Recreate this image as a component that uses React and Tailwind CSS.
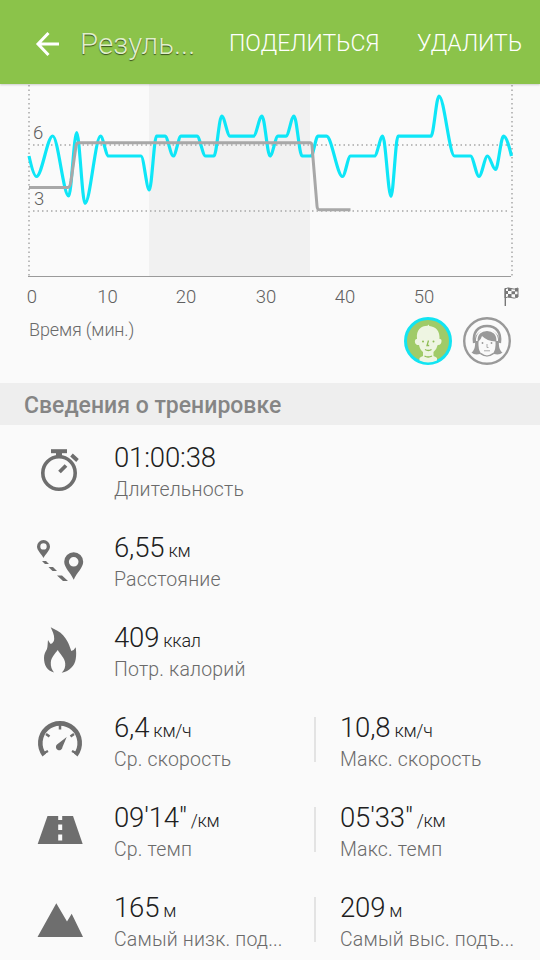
import React from 'react';

const heartPoints = [
  [29, 156], [36.5, 176.5], [52.7, 136], [68.7, 196], [76.7, 132.5], [85, 203.5], [100.5, 136.2],
  [108.5, 156], [141, 156], [149.3, 190], [156.5, 136.2], [165, 136.2], [173.3, 156], [181, 136.2],
  [197, 136.2], [205.5, 156], [214, 156], [221.7, 116], [230, 136.2], [253.5, 136.2], [262, 116],
  [270, 156], [278, 136.2], [286, 136.2], [294, 116], [302, 156], [311, 156], [318, 136.2],
  [326.5, 136.2], [342.5, 176.5], [350.5, 156], [374.5, 156], [382.7, 136.2], [391, 196.5],
  [398, 136.2], [431, 136.2], [439, 96], [454.5, 156], [470.5, 156], [479, 176.5], [487.5, 156],
  [495.5, 169.5], [503.5, 136.2], [511.5, 156],
];

const curve = heartPoints.reduce((d, [x, y], i) => {
  if (i === 0) return `M${x} ${y}`;
  const [px, py] = heartPoints[i - 1];
  if (i === 1) return `${d}C${px + 2} ${py + 9} ${x - 2.5} ${y} ${x} ${y}`;
  if (i === heartPoints.length - 1) return `${d}C${px + 3} ${py} ${x - 2} ${y - 8} ${x} ${y}`;
  const k = (x - px) * 0.33;
  return `${d}C${px + k} ${py} ${x - k} ${y} ${x} ${y}`;
}, '');

function Chart() {
  return (
    <svg className="block h-[226px] w-[540px]" viewBox="0 84 540 226" fill="none">
      <rect x="149" y="84" width="161" height="192" fill="#f1f1f1" />
      <g stroke="#a8a8a8" strokeWidth="1.5" strokeDasharray="1.5 3">
        <path d="M29 85V276M512 85V276" />
        <path d="M33 145H508M33 211H508" />
      </g>
      <path d="M28 276.500H511" stroke="#9a9a9a" strokeWidth="1" />
      <path d={curve} stroke="#0ee6f7" strokeWidth="3.200" strokeLinejoin="round" />
      <path d="M29 187.5H68C70 187.5 70.5 184 71 181L76 146Q76.5 142.8 79 142.8H310.5Q311.700 143 312 146L317 206Q317.300 209.700 319 209.700H350.500" stroke="#a8a8a8" strokeWidth="3" />
      <g fill="#606060" fontFamily="Roboto" fontSize="18.500" fontWeight="300">
        <text x="33" y="139">6</text>
        <text x="34" y="205">3</text>
        <text x="32" y="303" textAnchor="middle">0</text>
        <text x="107.500" y="303" textAnchor="middle">10</text>
        <text x="186" y="303" textAnchor="middle">20</text>
        <text x="266" y="303" textAnchor="middle">30</text>
        <text x="345" y="303" textAnchor="middle">40</text>
        <text x="424" y="303" textAnchor="middle">50</text>
      </g>
      <path d="M505.300 288V306" stroke="#777" strokeWidth="1.400" />
      <path d="M505 289q3-2 6-.5t7-.5v9q-4 2-7 .5t-6 .5z" stroke="#777" strokeWidth="1" />
      <path d="M508 288h3.500v3h-3.500zM515 288.500h3v3h-3zM511.500 291.300h3.500v3h-3.500zM505 291h3v3h-3zM508 294h3.500v3.500h-3.500zM515 294.200h3v3h-3z" fill="#777" />
    </svg>
  );
}

function ManAvatar() {
  return (
    <svg className="block size-12" viewBox="0 0 48 48" fill="none">
      <circle cx="24" cy="24" r="22.500" fill="#a0cb68" stroke="#12e4f2" strokeWidth="3" />
      <path d="M15.500 43.500v-2.500q1-1 3.500-2v-4q-3-2-4-7c-3 .3-4.500-2-4-4.500q.3-2 2-1.500C12 13 17 8.800 23.500 8.800l1-1.300.8 1.400C32 9.500 36 14 35.500 22q2-.5 2 1.500c.3 2.500-1.300 4.800-3.800 4.500q-1 4.500-4.200 7v4q2.500 1 3.500 2v2.500q-9 4-17.500 0z" fill="#eef5e2" />
      <path d="M24.500 23.500l-1.500 5h2.200M21 32.500q3.500 2 6.500 0M20.500 39q3.500 2 7.500 0" stroke="#8fbd55" strokeWidth="1.300" />
      <circle cx="19" cy="24.500" r="1" fill="#8fbd55" />
      <circle cx="29.500" cy="24.500" r="1" fill="#8fbd55" />
    </svg>
  );
}

function WomanAvatar() {
  return (
    <svg className="block size-12" viewBox="0 0 48 48" fill="none">
      <circle cx="24" cy="24" r="22.800" stroke="#999" strokeWidth="2.400" />
      <path d="M11.200 26C9.500 15 15 9 24 9s14.500 6 12.800 17" stroke="#999" strokeWidth="2.600" />
      <path d="M12 24C11.500 16.500 17 13.500 24 13.500S36.500 16.500 36 24c-.5 5 .5 9.500 3.500 11.500-2 2-5 2.300-8.500 1.500Q24 41.500 17 37c-3.500.8-6.500.5-8.500-1.500 3-2 4-6.500 3.500-11.500z" fill="#999" />
      <path d="M13.800 24C13.500 17 18 13.200 24 13.200S34.500 17 34.200 24" stroke="#fafafa" strokeWidth="1.600" />
      <path d="M15.500 24.500q2.500-2 3.500-5.500 5 5 13.500 5.500 .5 8-2.500 12-6 5-12 0-3-4-2.500-12z" fill="#f9f9f9" />
      <path d="M18 36.500q6 5 12 0" stroke="#999" strokeWidth="1.200" />
      <path d="M24 27v3.500h1.500M21 33.800h6" stroke="#aaa" />
      <circle cx="19.500" cy="26" r=".9" fill="#999" />
      <circle cx="28.500" cy="26" r=".9" fill="#999" />
    </svg>
  );
}

// Every icon is drawn in a 60×90 box, the height of one row.
const icons = {
  watch: (
    <g fill="none" stroke="#6e6e6e">
      <circle cx="29" cy="47" r="16.200" strokeWidth="3.600" />
      <path d="M21 25.200H37" strokeWidth="4" />
      <path d="M29 26V31" strokeWidth="6" />
      <path d="M41.500 29l6 5.500M29.500 46l6.500-6.500" strokeWidth="3.800" />
    </g>
  ),
  route: (
    <g fill="#6e6e6e">
      <path fillRule="evenodd" d="M13.500 24a6.500 6.500 0 0 0-6.500 6.500c0 4 4.500 7.500 6.500 11.500 2-4 6.500-7.500 6.500-11.500a6.500 6.500 0 0 0-6.500-6.500zm0 3.200a3.200 3.200 0 1 1 0 6.400 3.200 3.200 0 0 1 0-6.400z" />
      <path fillRule="evenodd" d="M43.700 36.300a9.500 9.500 0 0 0-9.500 9.500c0 6 6.500 11 9.500 18 3-7 9.500-12 9.500-18a9.500 9.500 0 0 0-9.500-9.500zm0 4.700a4.800 4.800 0 1 1 0 9.600 4.800 4.800 0 0 1 0-9.600z" />
      <path d="M12 45h4l3 3h-4zM18.500 51h4.500l4 4h-4.500zM27 59.500h5l6 5.500h-5z" />
    </g>
  ),
  flame: (
    <path fill="#6e6e6e" d="M20.700 21.300C25 24 30 25.500 33.300 29.500S38 36 39.300 39.500l2 5.500q2.700-.5 4.400-3.700c.5 4 .8 8 0 12-1.200 6.500-6 12-14 13.400 3-3 3.800-6 3.500-9.500C34.800 52 30 48 27.700 44 25 48 21.300 51 20.800 56.500c-.3 4 1 7.200 3.200 10C17 64.500 14 59 14 52c0-4 1.500-6.500 3-9 .8-3 .6-6 1-9 .8 1 1.500 3 2.700 4 2.300-1 3.300-2.500 3.500-5 .2-4.500-2-8-3.500-11.700z" />
  ),
  gauge: (
    <g fill="none" stroke="#6e6e6e">
      <path d="M14.300 60A19.700 19.700 0 1 1 45.700 60" strokeWidth="4.600" transform="translate(0 -1)" />
      <path d="M30 28v5.500M16 38l3.500 2.500M44 38l-3.500 2.500M13 57.500l5-2.500M47 57.500l-5-2.500" strokeWidth="2.500" />
      <path d="M36.700 41L27 48.500a3.300 3.300 0 1 0 5.500 2.500z" fill="#6e6e6e" stroke="none" />
    </g>
  ),
  road: (
    <g>
      <path d="M17.500 30H43L52.700 58H7.700z" fill="#6e6e6e" />
      <path d="M28.200 29.500h4V34h-4zM28.200 38.500h4v5.500h-4zM28.200 48.500h4v6h-4z" fill="#fafafa" />
    </g>
  ),
  peaks: <path fill="#6e6e6e" d="M7.500 61L26.300 27.300 37 45.500 41.700 37.700 53 61z" />,
};

const rows = [
  ['watch', ['01:00:38', '', 'Длительность']],
  ['route', ['6,55', 'км', 'Расстояние']],
  ['flame', ['409', 'ккал', 'Потр. калорий']],
  ['gauge', ['6,4', 'км/ч', 'Ср. скорость'], ['10,8', 'км/ч', 'Макс. скорость']],
  ['road', ["09'14\"", '/км', 'Ср. темп'], ["05'33\"", '/км', 'Макс. темп']],
  ['peaks', ['165', 'м', 'Самый низк. под...'], ['209', 'м', 'Самый выс. подъ...']],
];

function Stat({ data: [value, unit, label] }) {
  return (
    <div className="whitespace-nowrap pt-4">
      <div className="flex h-8 items-baseline gap-[4px] text-[#202020]">
        <span className="text-[27.500px] leading-8 font-light tracking-[-0.150px]">{value}</span>
        {unit && <span className="text-[18px] leading-6 font-light tracking-[-0.300px]">{unit}</span>}
      </div>
      <div className="mt-[4px] text-[19.500px] leading-6 font-light tracking-[0.180px] text-[#6a6a6a]">{label}</div>
    </div>
  );
}

export default function App() {
  return (
    <div className="flex h-[960px] w-[540px] flex-col overflow-hidden bg-[#fafafa] font-['Roboto','Noto_Sans',sans-serif]">
      <header className="z-10 flex h-[84px] shrink-0 items-center bg-[#8bc34a] pt-[3px] text-white shadow-[0_1px_2px_rgba(0,0,0,0.18)]">
        <svg className="ml-[35px] h-[26px] w-[26px] shrink-0" viewBox="0 0 26 26" fill="none" stroke="white" strokeWidth="3">
          <path d="M13.500 2L3 13l10.500 11M3 13h21" />
        </svg>
        <h1 className="ml-[19px] w-[130px] whitespace-nowrap text-[29.500px] leading-9 font-light text-[#e0efcc] [text-shadow:0_1px_1px_rgba(0,0,0,0.6)]">Резуль...</h1>
        <button className="ml-[19px] w-[151px] text-left text-[23px] leading-8 font-light">ПОДЕЛИТЬСЯ</button>
        <button className="ml-[37px] whitespace-nowrap text-left text-[23px] leading-8 font-light">УДАЛИТЬ</button>
      </header>
      <section className="flex h-[299px] shrink-0 flex-col">
        <Chart />
        <div className="flex pr-[29px] pl-[29px]">
          <span className="mt-[8px] text-[18px] leading-6 font-light tracking-[-0.150px] text-[#6a6a6a]">Время (мин.)</span>
          <div className="mt-[7px] ml-auto flex gap-[11px]">
            <ManAvatar />
            <WomanAvatar />
          </div>
        </div>
      </section>
      <h2 className="h-[42px] shrink-0 bg-[#eee] pl-6 text-[23px] leading-[46px] font-medium text-[#858585]">Сведения о тренировке</h2>
      <main className="flex shrink-0 flex-col pt-px">
        {rows.map(([icon, first, second]) => (
          <div key={icon} className="flex h-[90px]">
            <svg className="ml-[30px] h-[90px] w-[60px] shrink-0" viewBox="0 0 60 90">{icons[icon]}</svg>
            <div className="ml-6 w-[200px]"><Stat data={first} /></div>
            {second && (
              <>
                <div className="mt-[21px] h-[45px] w-[2px] bg-[#e3e3e3]" />
                <div className="ml-6"><Stat data={second} /></div>
              </>
            )}
          </div>
        ))}
      </main>
    </div>
  );
}
